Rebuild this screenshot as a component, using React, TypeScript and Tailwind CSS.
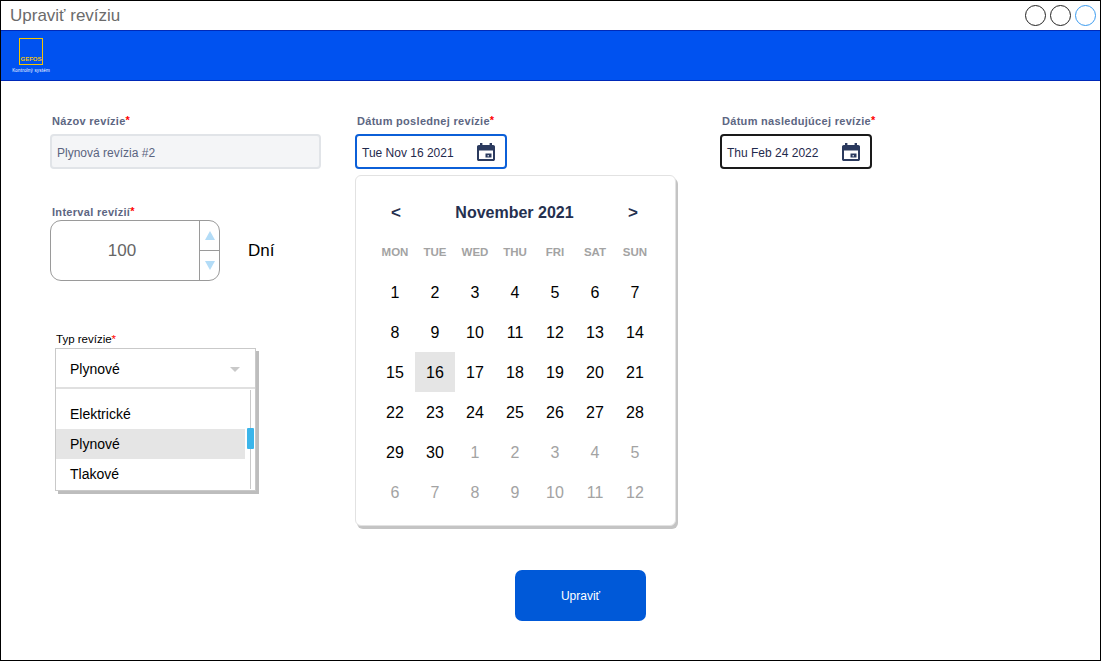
const WEEK = ["MON", "TUE", "WED", "THU", "FRI", "SAT", "SUN"];
const DAYS = [
  ...Array.from({ length: 30 }, (_, i) => ({ day: i + 1, muted: false })),
  ...Array.from({ length: 12 }, (_, i) => ({ day: i + 1, muted: true })),
];

function Label({ text, className = "" }: { text: string; className?: string }) {
  return (
    <p className={`text-[11px] leading-[14px] font-bold tracking-[0.3px] text-[#5d6682] ${className}`}>
      {text}
      <span className="relative -top-[1px] tracking-normal text-[#ff0000]">*</span>
    </p>
  );
}

function CalendarIcon() {
  return (
    <svg width="22" height="22" viewBox="0 0 22 22" fill="none">
      <path fillRule="evenodd" d="M5 2h2.400v2h7.200V2H17v2h1.200c1 0 1.800.8 1.800 1.800v12.400c0 1-.8 1.800-1.800 1.800H3.800c-1 0-1.800-.8-1.800-1.800V5.800c0-1 .8-1.800 1.800-1.800H5V2zM4 9.500V18h14V9.500H4z" fill="#2b3a5e" />
      <rect x="10.500" y="12.500" width="6" height="4" fill="#2b3a5e" />
      <rect x="12.500" y="14" width="1.500" height="1.500" fill="#c8cfdd" />
    </svg>
  );
}

function DateField({ value, border }: { value: string; border: string }) {
  return (
    <div className={`mt-[6px] flex h-[35px] w-[152px] items-center justify-between rounded-[4px] border-2 pr-[8px] pl-[5px] ${border}`}>
      <span className="pt-[2px] text-[12px] text-[#1f2a4d]">{value}</span>
      <CalendarIcon />
    </div>
  );
}

function Logo() {
  return (
    <div className="flex w-[40px] flex-col items-center">
      <div className="flex h-[27px] w-[24px] items-end justify-center border border-[#f5c400] pb-[2px]">
        <span className="text-[6px] leading-[6px] font-bold text-[#f5c400]">GEFOS</span>
      </div>
      <span className="mt-[3px] text-[4.500px] leading-[5px] tracking-[0.2px] whitespace-nowrap text-white">Kontrolný systém</span>
    </div>
  );
}

function Calendar() {
  return (
    <div className="mt-[6px] h-[351px] w-[321px] rounded-[6px] border border-[#e2e2e2] bg-white px-[19px] pt-[27px] shadow-[2px_3px_0_#c4c4c4]">
      <div className="flex h-[20px] items-center justify-between pr-[18px] pl-[16px] font-bold text-[#25304f]">
        <span className="text-[17px]">&lt;</span>
        <span className="text-[16px]">November 2021</span>
        <span className="text-[17px]">&gt;</span>
      </div>
      <div className="mt-[19px] grid grid-cols-[repeat(7,40px)]">
        {WEEK.map((d) => (
          <span key={d} className="text-center text-[11.500px] leading-[20px] font-bold text-[#a3a3a3]">{d}</span>
        ))}
      </div>
      <div className="mt-[10px] grid grid-cols-[repeat(7,40px)] auto-rows-[40px]">
        {DAYS.map((d, i) => (
          <span
            key={i}
            className={`flex items-center justify-center pt-[2px] text-[16px] ${d.muted ? "text-[#a3a3a3]" : "text-black"} ${!d.muted && d.day === 16 ? "bg-[#e5e5e5]" : ""}`}
          >
            {d.day}
          </span>
        ))}
      </div>
    </div>
  );
}

function Stepper() {
  return (
    <div className="flex h-[61px] w-[170px] rounded-[11px] border border-[#9a9a9a]">
      <div className="flex flex-1 items-center justify-center pr-[6px] text-[17px] text-[#666]">100</div>
      <div className="flex w-[20px] flex-col border-l border-[#9a9a9a]">
        <div className="flex h-[30px] items-center justify-center border-b border-[#9a9a9a]">
          <span className="h-0 w-0 border-x-[5px] border-b-[9px] border-x-transparent border-b-[#b3dcf7]" />
        </div>
        <div className="flex flex-1 items-center justify-center">
          <span className="h-0 w-0 border-x-[5px] border-t-[9px] border-x-transparent border-t-[#b3dcf7]" />
        </div>
      </div>
    </div>
  );
}

function Select() {
  return (
    <div className="mt-[2px] w-[201px] border border-[#c9c9c9] bg-white shadow-[3px_3px_0_#bdbdbd]">
      <div className="flex h-[40px] items-center justify-between border-b-2 border-[#e0e0e0] pt-[2px] pr-[15px] pl-[14px]">
        <span className="text-[14px] text-black">Plynové</span>
        <span className="h-0 w-0 border-x-[5px] border-t-[5px] border-x-transparent border-t-[#c9c9c9]" />
      </div>
      <div className="relative h-[101px] pt-[10px] text-[14px] leading-[30px] text-black">
        <div className="pl-[14px]">Elektrické</div>
        <div className="w-[189px] bg-[#e5e5e5] pl-[14px]">Plynové</div>
        <div className="pl-[14px]">Tlakové</div>
        <span className="absolute top-[1px] bottom-[1px] left-[194px] w-px bg-[#c9c9c9]" />
        <span className="absolute top-[39px] left-[191px] h-[21px] w-[7px] rounded-[1px] bg-[#3bb5ea]" />
      </div>
    </div>
  );
}

export default function App() {
  return (
    <div className="flex h-[661px] w-[1101px] flex-col border border-black bg-white font-['Liberation_Sans',Arial,sans-serif]">
      <header className="flex h-[29px] shrink-0 items-center justify-between pr-[4px] pl-[9px]">
        <h1 className="text-[17px] text-[#6b6b6b]">Upraviť revíziu</h1>
        <div className="flex gap-[4px]">
          <span className="h-[21px] w-[21px] rounded-full border border-[#222]" />
          <span className="h-[21px] w-[21px] rounded-full border border-[#222]" />
          <span className="h-[21px] w-[21px] rounded-full border border-[#3a9bf0]" />
        </div>
      </header>
      <div className="flex h-[51px] shrink-0 items-start border-y border-[#0029b8] bg-[#0052f0] pt-[7px] pl-[10px]">
        <Logo />
      </div>
      <main className="flex flex-1 pt-[33px]">
        <section className="ml-[49px] w-[305px]">
          <Label text="Názov revízie" className="ml-[2px]" />
          <div className="mt-[6px] flex h-[35px] w-[271px] items-center rounded-[4px] border-2 border-[#e1e4e8] bg-[#f4f5f7] pt-[2px] pl-[5px] text-[12px] text-[#5a6480]">
            Plynová revízia #2
          </div>
          <Label text="Interval revízií" className="mt-[36px] ml-[2px]" />
          <div className="mt-[1px] flex items-center gap-[28px]">
            <Stepper />
            <span className="text-[17px] text-black">Dní</span>
          </div>
          <p className="mt-[51px] ml-[6px] text-[11.500px] leading-[14px] text-black">
            Typ revízie<span className="text-[#ff0000]">*</span>
          </p>
          <div className="ml-[5px]"><Select /></div>
        </section>
        <section className="w-[365px]">
          <Label text="Dátum poslednej revízie" className="ml-[2px]" />
          <DateField value="Tue Nov 16 2021" border="border-[#0b5fd8]" />
          <Calendar />
          <button className="mt-[44px] ml-[160px] flex h-[51px] w-[131px] items-center justify-center rounded-[7px] bg-[#0059d8] text-[12px] text-white">
            Upraviť
          </button>
        </section>
        <section>
          <Label text="Dátum nasledujúcej revízie" className="ml-[2px]" />
          <DateField value="Thu Feb 24 2022" border="border-[#1a1a1a]" />
        </section>
      </main>
    </div>
  );
}
